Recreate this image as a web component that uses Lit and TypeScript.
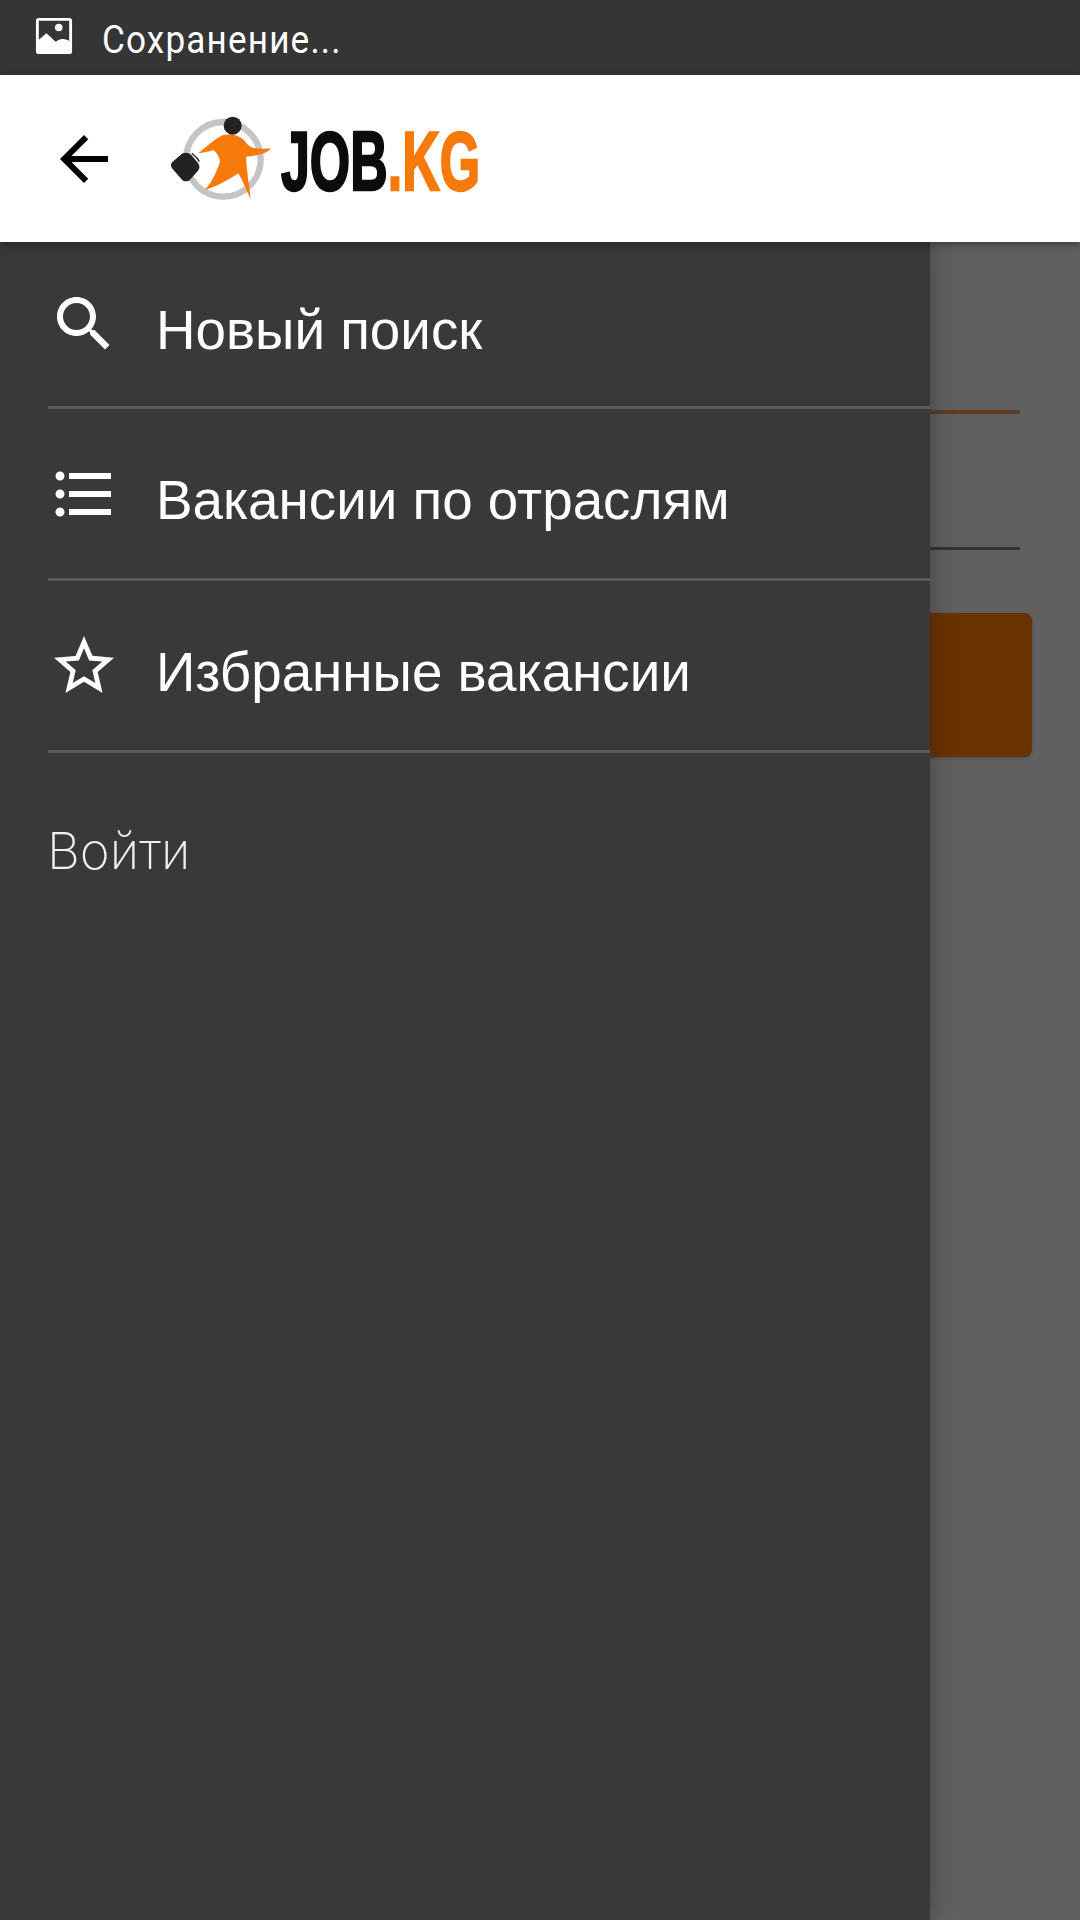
import { LitElement, html, css, svg } from "lit";
import { customElement } from "lit/decorators.js";

const items = [
  { label: "Новый поиск", d: "M15.5 14h-.79l-.28-.27C15.41 12.59 16 11.11 16 9.5 16 5.91 13.09 3 9.5 3S3 5.91 3 9.5 5.91 16 9.5 16c1.61 0 3.09-.59 4.23-1.57l.27.28v.79l5 4.99L20.49 19l-4.99-5zm-6 0C7.01 14 5 11.99 5 9.5S7.01 5 9.5 5 14 7.01 14 9.5 11.99 14 9.5 14z" },
  { label: "Вакансии по отраслям", d: "M4 10.5c-.83 0-1.5.67-1.5 1.5s.67 1.5 1.5 1.5 1.5-.67 1.5-1.5-.67-1.5-1.5-1.5zm0-6c-.83 0-1.5.67-1.5 1.5S3.17 7.5 4 7.5 5.5 6.83 5.5 6 4.83 4.5 4 4.5zm0 12c-.83 0-1.5.68-1.5 1.5s.68 1.5 1.5 1.5 1.5-.68 1.5-1.5-.67-1.5-1.5-1.5zM7 19h14v-2H7v2zm0-6h14v-2H7v2zm0-8v2h14V5H7z" },
  { label: "Избранные вакансии", d: "M22 9.24l-7.19-.62L12 2 9.19 8.63 2 9.24l5.46 4.73L5.82 21 12 17.27 18.18 21l-1.63-7.03L22 9.24zM12 15.4l-3.76 2.27 1-4.28-3.32-2.88 4.38-.38L12 6.1l1.71 4.04 4.38.38-3.32 2.88 1 4.28L12 15.4z" },
];

const figure = svg`
  <g transform="scale(0.3333)">
    <circle cx="190" cy="163" r="112" fill="none" stroke="#c4c4c4" stroke-width="19"/>
    <path d="M115 145 C140 125 165 100 190 90 L215 88 C235 92 250 100 262 118 C270 128 285 134 333 130 C320 145 300 152 258 155 C260 200 268 240 272 282 C258 255 248 225 235 205 C205 225 170 245 135 255 C150 235 165 215 180 170 C178 155 170 142 160 135 C145 140 130 143 115 145 Z" fill="#f57a0a"/>
    <circle cx="218" cy="62" r="27" fill="#222"/>
    <path d="M95 145 C100 150 112 155 118 170" fill="none" stroke="#222" stroke-width="4"/>
    <path d="M38 170 L66 146 C75 141 86 143 94 150 L114 174 C120 182 120 190 114 197 L90 224 C84 230 72 230 66 224 L38 192 C31 184 32 176 38 170 Z" fill="#222"/>
  </g>
`;

@customElement("app-root")
export class AppRoot extends LitElement {
  static styles = css`
    :host { display: flex; flex-direction: column; width: 1080px; height: 1920px; overflow: hidden; font-family: "Liberation Sans", Arial, sans-serif; }
    .status { height: 75px; flex: none; background: #353535; display: flex; align-items: center; padding-left: 35px; gap: 29px; color: #fff; }
    .status svg { width: 38px; height: 38px; flex: none; margin-top: -4px; }
    .status span { font: 400 39px Roboto, sans-serif; letter-spacing: 1.3px; display: inline-block; transform-origin: left center; transform: scaleX(0.9); margin-top: 4px; white-space: nowrap; }
    .appbar { height: 167px; flex: none; background: #fff; display: flex; align-items: center; padding-left: 48px; gap: 40px; position: relative; z-index: 2; box-shadow: 0 3px 8px rgba(0,0,0,.35); }
    .appbar > svg { flex: none; display: block; }
    .logo { display: flex; align-items: center; }
    .logo svg { flex: none; display: block; margin-top: -8px; overflow: visible; }
    .brand { width: 199px; margin-top: 5px; white-space: nowrap; font: 700 84px/60px "Liberation Sans", Arial, sans-serif; -webkit-text-stroke-width: 2.5px; }
    .brand b { display: inline-block; font-weight: 700; transform-origin: left center; transform: scaleX(0.618); }
    .job { color: #0c0c0c; -webkit-text-stroke-color: #0c0c0c; }
    .kg { color: #f57a0a; -webkit-text-stroke-color: #f57a0a; }
    .body { flex: 1; position: relative; background: #606060; }
    .form { display: flex; flex-direction: column; padding: 168px 60px 0 0; }
    .line1 { height: 4px; background: #5c3e24; }
    .line2 { height: 3px; background: #333; margin-top: 133px; }
    .cta { height: 144px; margin: 63px -12px 0 0; background: #693200; border-radius: 8px; box-shadow: 0 1px 3px rgba(0,0,0,.25); }
    .drawer { position: absolute; left: 0; top: 0; bottom: 0; width: 930px; background: #393939; box-shadow: 0 0 24px rgba(0,0,0,.3); display: flex; flex-direction: column; }
    .row { display: flex; align-items: center; padding-left: 48px; gap: 36px; color: #fff; height: 169px; }
    .row:first-child { height: 164px; }
    .row svg { width: 72px; height: 72px; flex: none; fill: #fff; }
    .row span { font-size: 54.75px; line-height: 64px; padding-top: 12px; white-space: nowrap; }
    .divider { height: 3px; margin-left: 48px; background: #5a5a5a; flex: none; }
    .login { margin: 66px 0 0 47px; font: 200 51px/64px Inter, Roboto, sans-serif; color: #f0f0f0; }
  `;

  render() {
    return html`
      <div class="status">
        <svg viewBox="0 0 40 40"><path fill="#fff" fill-rule="evenodd" d="M4 1h32a3 3 0 0 1 3 3v32a3 3 0 0 1-3 3H4a3 3 0 0 1-3-3V4a3 3 0 0 1 3-3zm0 3v20l8-7c4 3 6 6 10 9 4-3 7-4 14-1V4H4z"/><circle cx="25" cy="11" r="4" fill="#fff"/></svg>
        <span>Сохранение...</span>
      </div>
      <div class="appbar">
        <svg width="72" height="72" viewBox="0 0 24 24"><path d="M20 11H7.83l5.59-5.59L12 4l-8 8 8 8 1.41-1.41L7.83 13H20v-2z"/></svg>
        <div class="logo">
          <svg width="121" height="100" viewBox="0 0 121 100">${figure}</svg>
          <div class="brand"><b><span class="job">JOB</span><span class="kg">.KG</span></b></div>
        </div>
      </div>
      <div class="body">
        <div class="form">
          <div class="line1"></div>
          <div class="line2"></div>
          <div class="cta"></div>
        </div>
        <nav class="drawer">
          ${items.map(i => html`
            <div class="row"><svg viewBox="0 0 24 24"><path d=${i.d}></path></svg><span>${i.label}</span></div>
            <div class="divider"></div>`)}
          <div class="login">Войти</div>
        </nav>
      </div>
    `;
  }
}
